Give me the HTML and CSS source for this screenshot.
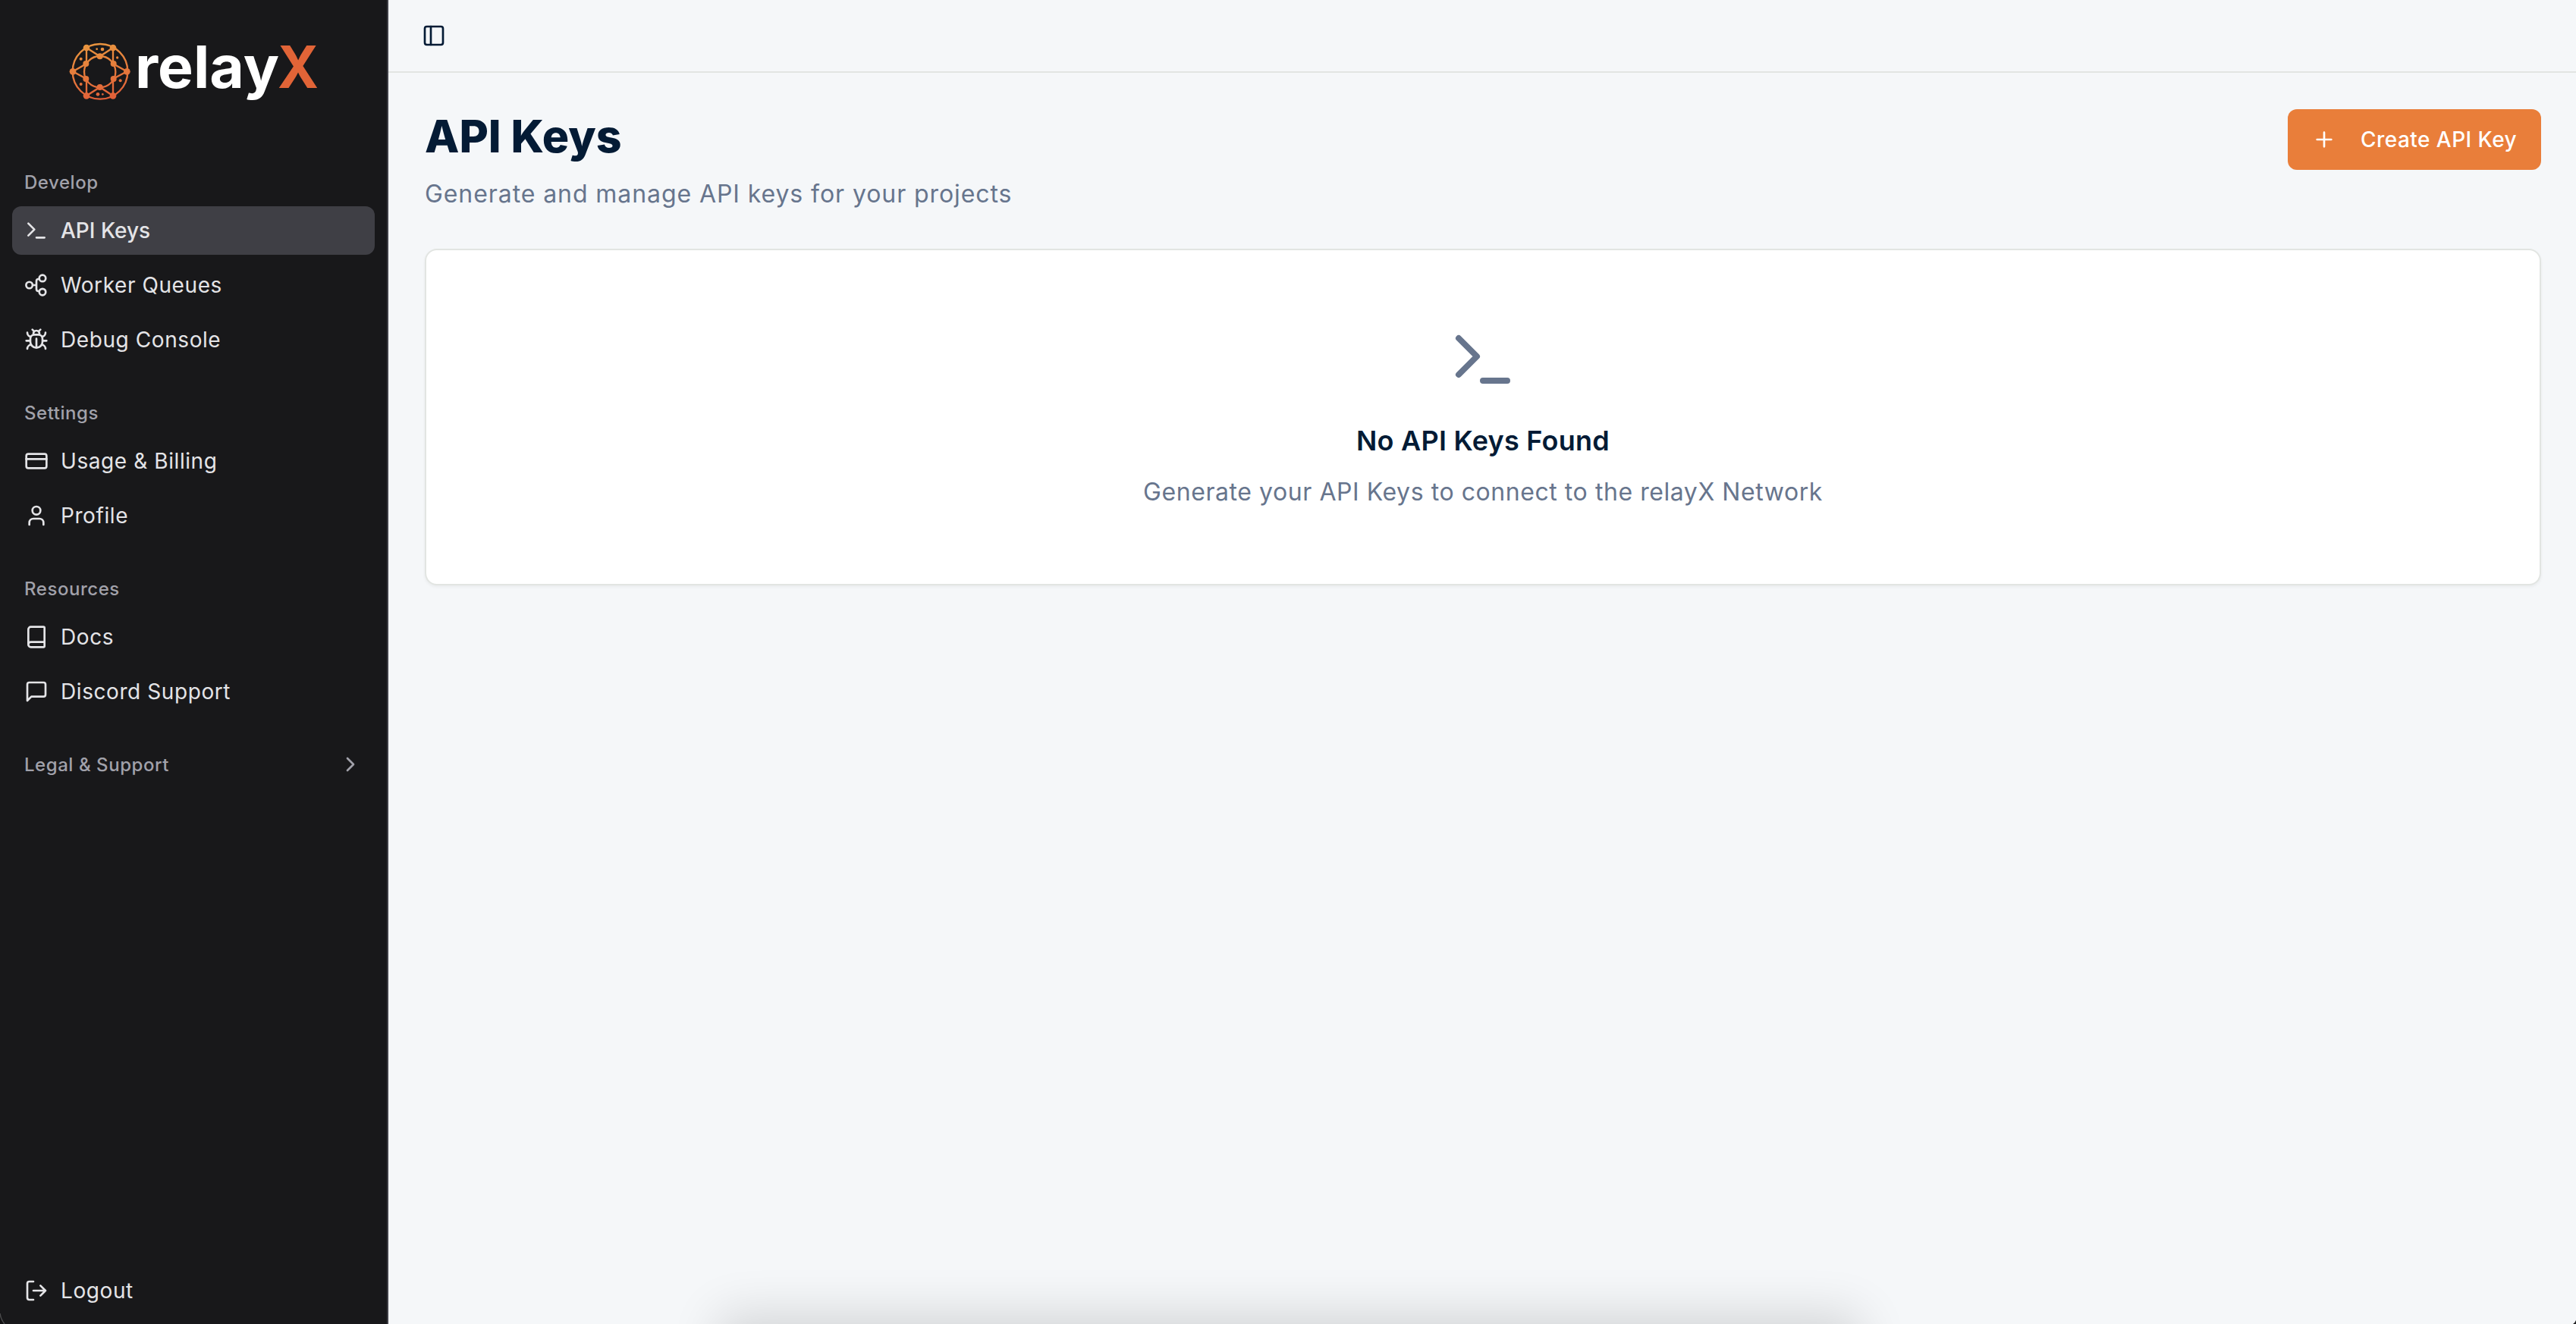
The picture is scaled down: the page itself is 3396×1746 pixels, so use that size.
FILE: index.html
```html
<!DOCTYPE html>
<html lang="en">
<head>
    <meta charset="UTF-8">
    <meta name="viewport" content="width=device-width, initial-scale=1.0">
    <title>API Keys - relayX</title>
    <link rel="stylesheet" href="styles.css">
</head>
<body>
    <div class="layout">
        <aside class="sidebar">
            <div class="logo">
                <svg width="370" height="110" viewBox="0 0 1110 330">
                    <defs>
                        <linearGradient id="globe" gradientUnits="userSpaceOnUse" x1="150" y1="50" x2="190" y2="275">
                            <stop offset="0" stop-color="#e9963f"/>
                            <stop offset="1" stop-color="#e15f38"/>
                        </linearGradient>
                    </defs>
                    <g fill="none" stroke="url(#globe)" stroke-width="7">
                        <circle cx="186" cy="163" r="109"/>
                        <circle cx="185" cy="164" r="62"/>
                        <path d="M132 69L185 103L237 69V132L292 163L237 192V259L185 225L132 259V192L78 163L132 132Z"/>
                    </g>
                    <g fill="url(#globe)">
                        <circle cx="132" cy="69" r="13"/>
                        <circle cx="237" cy="69" r="13"/>
                        <circle cx="292" cy="163" r="13"/>
                        <circle cx="237" cy="259" r="13"/>
                        <circle cx="132" cy="259" r="13"/>
                        <circle cx="78" cy="163" r="13"/>
                        <circle cx="185" cy="103" r="12"/>
                        <circle cx="239" cy="132" r="12"/>
                        <circle cx="239" cy="192" r="12"/>
                        <circle cx="185" cy="225" r="12"/>
                        <circle cx="130" cy="192" r="12"/>
                        <circle cx="130" cy="132" r="12"/>
                        <circle cx="173" cy="74" r="4"/>
                        <circle cx="195" cy="75" r="7"/>
                        <circle cx="110" cy="113" r="6"/>
                        <circle cx="254" cy="108" r="5"/>
                        <circle cx="110" cy="213" r="6"/>
                        <circle cx="266" cy="199" r="6"/>
                        <circle cx="177" cy="253" r="7"/>
                        <circle cx="196" cy="253" r="4"/>
                    </g>
                    <text class="logo-text" x="324" y="228" textLength="570" lengthAdjust="spacingAndGlyphs">relay</text>
                    <text class="logo-text logo-x" x="888" y="228" textLength="162" lengthAdjust="spacingAndGlyphs">X</text>
                </svg>
            </div>

            <nav class="nav">
                <div class="group">
                    <div class="group-label"><span>Develop</span></div>
                    <a class="item active">
                        <svg class="icon" viewBox="0 0 24 24"><path d="M4 17l6-6-6-6M12 19h8"/></svg>
                        <span>API Keys</span>
                    </a>
                    <a class="item">
                        <svg class="icon" viewBox="0 0 24 24"><circle cx="5" cy="12" r="3.200"/><circle cx="18" cy="5.200" r="3.200"/><circle cx="18" cy="18.800" r="3.200"/><path d="M8.500 12H12M14.800 6H14a2 2 0 0 0-2 2v8a2 2 0 0 0 2 2h.8"/></svg>
                        <span>Worker Queues</span>
                    </a>
                    <a class="item">
                        <svg class="icon" viewBox="0 0 24 24"><path d="m8 2 1.880 1.880M14.120 3.880 16 2M9 7.130v-1a3.003 3.003 0 1 1 6 0v1M12 20c-3.300 0-6-2.700-6-6v-3a4 4 0 0 1 4-4h4a4 4 0 0 1 4 4v3c0 3.300-2.700 6-6 6M12 20v-9M6.530 9C4.600 8.800 3 7.100 3 5M6 13H2M3 21c0-2.100 1.700-3.900 3.800-4M20.970 5c0 2.100-1.600 3.800-3.500 4M22 13h-4M17.200 17c2.100.1 3.800 1.900 3.800 4"/></svg>
                        <span>Debug Console</span>
                    </a>
                </div>

                <div class="group">
                    <div class="group-label"><span>Settings</span></div>
                    <a class="item">
                        <svg class="icon" viewBox="0 0 24 24"><rect x="2" y="5" width="20" height="14" rx="2"/><path d="M2 10h20"/></svg>
                        <span>Usage &amp; Billing</span>
                    </a>
                    <a class="item">
                        <svg class="icon" viewBox="0 0 24 24"><path d="M19 21v-2a4 4 0 0 0-4-4H9a4 4 0 0 0-4 4v2"/><circle cx="12" cy="7" r="4"/></svg>
                        <span>Profile</span>
                    </a>
                </div>

                <div class="group">
                    <div class="group-label"><span>Resources</span></div>
                    <a class="item">
                        <svg class="icon" viewBox="0 0 24 24"><path d="M4 19.500v-15A2.500 2.500 0 0 1 6.500 2H19a1 1 0 0 1 1 1v18a1 1 0 0 1-1 1H6.500a1 1 0 0 1 0-5H20"/></svg>
                        <span>Docs</span>
                    </a>
                    <a class="item">
                        <svg class="icon" viewBox="0 0 24 24"><path d="M21 15a2 2 0 0 1-2 2H7l-4 4V5a2 2 0 0 1 2-2h14a2 2 0 0 1 2 2z"/></svg>
                        <span>Discord Support</span>
                    </a>
                </div>

                <div class="group">
                    <div class="group-label">
                        <span>Legal &amp; Support</span>
                        <svg class="icon" viewBox="0 0 24 24"><path d="m9 18 6-6-6-6"/></svg>
                    </div>
                </div>
            </nav>

            <div class="sidebar-footer">
                <a class="item">
                    <svg class="icon" viewBox="0 0 24 24"><path d="M9 21H5a2 2 0 0 1-2-2V5a2 2 0 0 1 2-2h4M16 17l5-5-5-5M21 12H9"/></svg>
                    <span>Logout</span>
                </a>
            </div>
        </aside>

        <main class="main">
            <header class="topbar">
                <svg class="icon" viewBox="0 0 24 24"><rect x="3" y="3" width="18" height="18" rx="2"/><path d="M9 3v18"/></svg>
            </header>

            <section class="content">
                <div class="page-head">
                    <div>
                        <h1>API Keys</h1>
                        <p class="subtitle">Generate and manage API keys for your projects</p>
                    </div>
                    <button class="create-btn">
                        <svg class="icon" viewBox="0 0 24 24"><path d="M5 12h14M12 5v14"/></svg>
                        <span>Create API Key</span>
                    </button>
                </div>

                <div class="card">
                    <svg class="icon empty-icon" viewBox="0 0 24 24"><path d="M4 17l6-6-6-6M12 19h8"/></svg>
                    <h3>No API Keys Found</h3>
                    <p class="empty-text">Generate your API Keys to connect to the relayX Network</p>
                </div>
            </section>
        </main>
    </div>

    <div class="dock-shadow"></div>
    <svg class="corner corner-left" viewBox="0 0 14 14"><path d="M0 0Q1 8 6 14H0Z" fill="#101011"/><path d="M0 0Q1 8 6 14" fill="none" stroke="#4a4a4c" stroke-width="1.500"/></svg>
    <svg class="corner corner-right" viewBox="0 0 14 14"><path d="M14 9Q13 12 10 14H14Z" fill="#1c1d1e"/></svg>
</body>
</html>
```

FILE: styles.css
```css
* {
    box-sizing: border-box;
}
body {
    margin: 0;
    font-family: Inter, "Open Sans", sans-serif;
    font-size: 28px;
    color: #041b35;
    background-color: #f5f7f9;
    overflow: hidden;
}
h1, h3, p {
    margin: 0;
}
.layout {
    display: flex;
    height: 100vh;
}
.icon {
    width: 32px;
    height: 32px;
    flex-shrink: 0;
    fill: none;
    stroke: currentColor;
    stroke-width: 2;
    stroke-linecap: round;
    stroke-linejoin: round;
}

/* sidebar */
.sidebar {
    width: 512px;
    flex-shrink: 0;
    display: flex;
    flex-direction: column;
    background-color: #18181a;
    border-right: 2px solid #3f3f46;
    color: #e4e4e7;
}
.logo {
    height: 192px;
    padding-top: 40px;
    display: flex;
    justify-content: center;
}
.logo-text {
    font-size: 231px;
    font-weight: 700;
    fill: #fff;
}
.logo-x {
    fill: #e16437;
}
.nav {
    flex: 1;
}
.group {
    padding: 16px;
    display: flex;
    flex-direction: column;
    gap: 8px;
}
.group-label {
    height: 64px;
    padding: 0 16px;
    margin-bottom: -8px;
    display: flex;
    align-items: center;
    justify-content: space-between;
    font-size: 24px;
    font-weight: 500;
    letter-spacing: 0.55px;
    color: #a1a1aa;
}
.item {
    height: 64px;
    padding: 0 16px;
    display: flex;
    align-items: center;
    gap: 16px;
    border-radius: 12px;
    letter-spacing: 0.58px;
}
.active {
    background-color: #3f3f45;
    font-weight: 500;
    letter-spacing: 0;
}
.sidebar-footer {
    padding: 16px 16px 12px;
}

/* content */
.main {
    flex: 1;
}
.topbar {
    height: 96px;
    padding: 0 44px;
    display: flex;
    align-items: center;
    border-bottom: 2px solid #e2e5e2;
}
.content {
    padding: 48px 46px 48px 48px;
}
.page-head {
    display: flex;
    justify-content: space-between;
    align-items: flex-start;
    margin-bottom: 40px;
}
h1 {
    font-size: 59px;
    line-height: 72px;
    font-weight: 800;
}
.subtitle {
    margin-top: 8px;
    font-size: 32px;
    line-height: 64px;
    letter-spacing: 0.92px;
    color: #67758d;
}
.create-btn {
    width: 334px;
    height: 80px;
    padding: 0 32px;
    display: flex;
    align-items: center;
    gap: 32px;
    border: none;
    border-radius: 12px;
    background-color: #e97e3a;
    color: #fff;
    font-family: inherit;
    font-size: 28px;
    font-weight: 500;
    letter-spacing: 0.46px;
    white-space: nowrap;
    cursor: pointer;
}
.card {
    display: flex;
    flex-direction: column;
    align-items: center;
    padding: 96px;
    background-color: #fff;
    border: 2px solid #e2e5e2;
    border-radius: 16px;
    box-shadow: 0 2px 4px rgba(0, 0, 0, 0.05);
}
.empty-icon {
    width: 96px;
    height: 96px;
    margin-bottom: 32px;
    color: #67758d;
}
h3 {
    margin-bottom: 16px;
    font-size: 36px;
    line-height: 54px;
    font-weight: 600;
    letter-spacing: 0.25px;
}
.empty-text {
    font-size: 32px;
    line-height: 50px;
    letter-spacing: 0.56px;
    color: #67758d;
}

/* shadow rising from below the window */
.dock-shadow {
    position: fixed;
    top: 100vh;
    left: 948px;
    width: 1504px;
    height: 100px;
    box-shadow: 0 -12px 65px rgba(0, 0, 0, 0.14);
}
.corner {
    position: fixed;
    bottom: 0;
    width: 14px;
    height: 14px;
}
.corner-left {
    left: 0;
}
.corner-right {
    right: 0;
}
```
